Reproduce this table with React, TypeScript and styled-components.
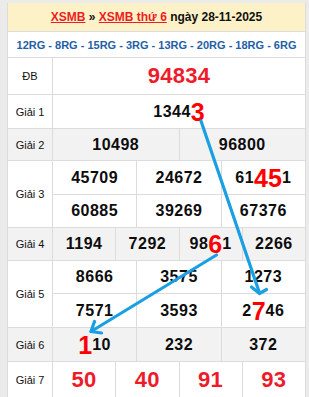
import styled, { createGlobalStyle } from "styled-components";

const GlobalStyle = createGlobalStyle`
  body {
    margin: 0;
    background: #ebebeb;
    font-family: "Liberation Sans", Arial, sans-serif;
    overflow: hidden;
  }
`;

type Prize = {
  label: string;
  cols: number;
  heights: number[];
  alt?: boolean;
  red?: boolean;
  nums: string[];
};

const prizes: Prize[] = [
  { label: "ĐB", cols: 1, heights: [36], red: true, nums: ["94834"] },
  { label: "Giải 1", cols: 1, heights: [33], nums: ["1344[3]"] },
  { label: "Giải 2", cols: 2, heights: [31], alt: true, nums: ["10498", "96800"] },
  {
    label: "Giải 3",
    cols: 3,
    heights: [33, 32],
    nums: ["45709", "24672", "61[45]1", "60885", "39269", "67376"],
  },
  { label: "Giải 4", cols: 4, heights: [32], alt: true, nums: ["1194", "7292", "98[6]1", "2266"] },
  {
    label: "Giải 5",
    cols: 3,
    heights: [32, 33],
    nums: ["8666", "3575", "1273", "7571", "3593", "2[7]46"],
  },
  { label: "Giải 6", cols: 3, heights: [33], alt: true, nums: ["[1]10", "232", "372"] },
  { label: "Giải 7", cols: 4, heights: [35], red: true, nums: ["50", "40", "91", "93"] },
];

function renderNumber(value: string) {
  return value
    .split(/(\[\d+\])/)
    .filter(Boolean)
    .map((part, i) =>
      part.startsWith("[") ? <Hot key={i}>{part.slice(1, -1)}</Hot> : <span key={i}>{part}</span>
    );
}

export default function App() {
  return (
    <>
      <GlobalStyle />
      <Page>
        <Table>
          <Header>
            <RedLink>XSMB</RedLink>&nbsp;»&nbsp;<RedLink>XSMB thứ 6</RedLink>&nbsp;ngày 28-11-2025
          </Header>
          <Codes>12RG - 8RG - 15RG - 3RG - 13RG - 20RG - 18RG - 6RG</Codes>
          {prizes.map((p) => (
            <Row key={p.label}>
              <Label $alt={p.alt}>{p.label}</Label>
              <Numbers $cols={p.cols} $rows={p.heights.map((h) => h + "px").join(" ")}>
                {p.nums.map((n, i) => (
                  <Cell key={i} $alt={p.alt} $red={p.red}>
                    {renderNumber(n)}
                  </Cell>
                ))}
              </Numbers>
            </Row>
          ))}
        </Table>
        <Arrows width="309" height="397" viewBox="0 0 309 397">
          <g stroke="#1a9fe2" strokeWidth="3.2" strokeLinecap="round" strokeLinejoin="round" fill="none">
            <line x1="201" y1="121" x2="259.5" y2="293" />
            <polyline points="251.5,287 259.5,293.5 266.5,289.5" />
            <line x1="216.5" y1="255" x2="91" y2="331.5" />
            <polyline points="94.5,321.5 91,331.5 101.5,333" />
          </g>
        </Arrows>
      </Page>
    </>
  );
}

const Page = styled.div`
  position: relative;
  width: 309px;
  height: 397px;
  padding: 3px 3px 0 7px;
  box-sizing: border-box;
  overflow: hidden;
`;

const Table = styled.div`
  width: 299px;
  background: #fff;
  border-left: 1px solid #dcdcdc;
  border-right: 1px solid #dcdcdc;
  box-sizing: border-box;
`;

const Header = styled.div`
  height: 28px;
  background: #fdf2c7;
  border-bottom: 1px solid #dcdcdc;
  display: flex;
  align-items: center;
  justify-content: center;
  font-size: 12px;
  font-weight: bold;
  color: #111;
`;

const RedLink = styled.a`
  color: #ee1c25;
  text-decoration: underline;
`;

const Codes = styled.div`
  height: 25px;
  border-bottom: 1px solid #dcdcdc;
  display: flex;
  align-items: center;
  justify-content: center;
  font-size: 11px;
  font-weight: bold;
  color: #1f60a8;
  white-space: nowrap;
`;

const Row = styled.div`
  display: grid;
  grid-template-columns: 44px 1fr;
  column-gap: 1px;
  background: #dcdcdc;
  border-bottom: 1px solid #dcdcdc;
`;

const Label = styled.div<{ $alt?: boolean }>`
  background: ${(p) => (p.$alt ? "#f2f2f2" : "#fff")};
  display: flex;
  align-items: center;
  justify-content: center;
  font-size: 11px;
  color: #111;
`;

const Numbers = styled.div<{ $cols: number; $rows: string }>`
  display: grid;
  grid-template-columns: repeat(${(p) => p.$cols}, 1fr);
  grid-template-rows: ${(p) => p.$rows};
  gap: 1px;
`;

const Cell = styled.div<{ $alt?: boolean; $red?: boolean }>`
  background: ${(p) => (p.$alt ? "#f2f2f2" : "#fff")};
  display: flex;
  align-items: center;
  justify-content: center;
  font-weight: bold;
  white-space: nowrap;
  font-size: ${(p) => (p.$red ? "22px" : "16px")};
  letter-spacing: ${(p) => (p.$red ? "0.3px" : "0.5px")};
  color: ${(p) => (p.$red ? "#ee1c2b" : "#0d0d0d")};
`;

const Hot = styled.span`
  font-size: 25px;
  line-height: 0;
  color: #ff0000;
  letter-spacing: 0;
`;

const Arrows = styled.svg`
  position: absolute;
  top: 0;
  left: 0;
  pointer-events: none;
`;
